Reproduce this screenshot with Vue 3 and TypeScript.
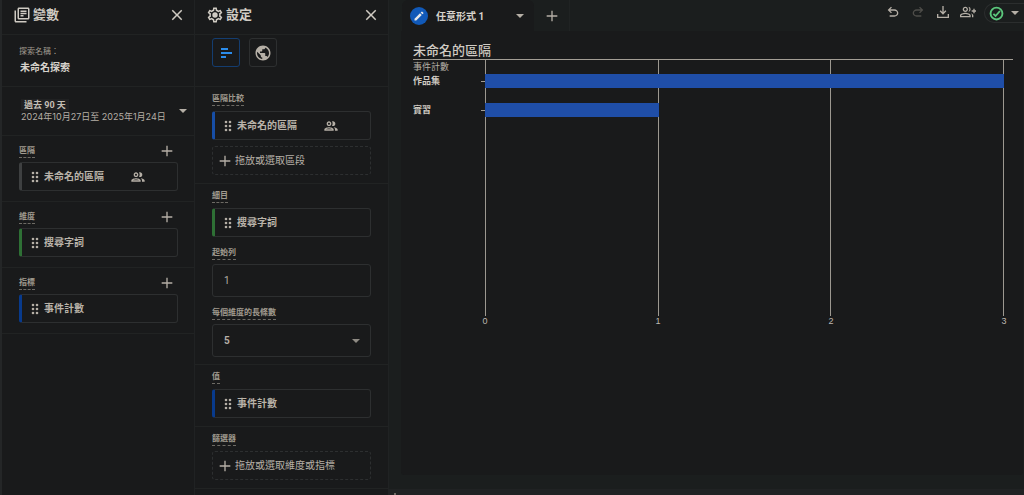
<script setup lang="ts">
import { ref } from 'vue'

interface VariableGroup {
  id: string
  label: string
  item: string
  tone: 'segment' | 'dimension' | 'metric'
  people?: boolean
}

interface ChartRow {
  label: string
  value: number
}

const variableGroups: VariableGroup[] = [
  { id: 'segments', label: '區隔', item: '未命名的區隔', tone: 'segment', people: true },
  { id: 'dimensions', label: '維度', item: '搜尋字詞', tone: 'dimension' },
  { id: 'metrics', label: '指標', item: '事件計數', tone: 'metric' },
]

const rows: ChartRow[] = [
  { label: '作品集', value: 3 },
  { label: '實習', value: 1 },
]
const maxValue = 3
const ticks = [0, 1, 2, 3]

const explorationName = ref('未命名探索')
const startRow = ref('1')
const barCount = ref('5')
</script>

<template>
  <div class="page">
    <svg class="sprite" aria-hidden="true">
      <symbol id="close" viewBox="0 0 24 24">
        <path d="M19 6.41 17.59 5 12 10.59 6.41 5 5 6.41 10.59 12 5 17.59 6.41 19 12 13.41 17.59 19 19 17.59 13.41 12z" />
      </symbol>
      <symbol id="plus" viewBox="0 0 24 24"><path d="M20 13h-7v7h-2v-7H4v-2h7V4h2v7h7z" /></symbol>
      <symbol id="caret" viewBox="0 0 24 24"><path d="M4 8l8 8 8-8z" /></symbol>
      <symbol id="grip" viewBox="0 0 8 12">
        <circle cx="2" cy="2" r="1.300" /><circle cx="6" cy="2" r="1.300" />
        <circle cx="2" cy="6" r="1.300" /><circle cx="6" cy="6" r="1.300" />
        <circle cx="2" cy="10" r="1.300" /><circle cx="6" cy="10" r="1.300" />
      </symbol>
      <symbol id="people" viewBox="0 0 24 24">
        <path d="M9 13.75c-2.34 0-7 1.17-7 3.5V19h14v-1.75c0-2.33-4.66-3.5-7-3.5zM4.34 17c.84-.58 2.87-1.25 4.66-1.25s3.82.67 4.66 1.25H4.34zM9 12c1.93 0 3.5-1.57 3.5-3.5S10.93 5 9 5 5.5 6.57 5.5 8.5 7.07 12 9 12zm0-5c.83 0 1.5.67 1.5 1.5S9.83 10 9 10s-1.5-.67-1.5-1.5S8.17 7 9 7zm7.04 6.81c1.16.84 1.96 1.96 1.96 3.44V19h4v-1.75c0-2.02-3.5-3.17-5.96-3.44zM15 12c1.93 0 3.5-1.57 3.5-3.5S16.93 5 15 5c-.54 0-1.04.13-1.5.35.63.89 1 1.98 1 3.15s-.37 2.26-1 3.15c.46.22.96.35 1.5.35z" />
      </symbol>
    </svg>

    <aside class="panel panel--variables">
      <header class="panel-head">
        <svg class="head-icon" viewBox="0 0 24 24" aria-hidden="true">
          <path d="M4 6H2v14c0 1.1.9 2 2 2h14v-2H4V6z" />
          <path d="M20 2H8c-1.1 0-2 .9-2 2v12c0 1.1.9 2 2 2h12c1.1 0 2-.9 2-2V4c0-1.1-.9-2-2-2zm0 14H8V4h12v12zM10 9h8v2h-8zm0 3h4v2h-4zm0-6h8v2h-8z" />
        </svg>
        <h2>變數</h2>
        <button class="icon-button" type="button" aria-label="關閉變數"><svg><use href="#close" /></svg></button>
      </header>

      <div class="name-block">
        <label for="exploration-name">探索名稱：</label>
        <input id="exploration-name" v-model="explorationName" type="text" />
      </div>

      <button class="date-block" type="button">
        <span class="date-text">
          <span class="date-range">過去 90 天</span>
          <span class="date-span">2024年10月27日至 2025年1月24日</span>
        </span>
        <svg class="caret"><use href="#caret" /></svg>
      </button>

      <section v-for="group in variableGroups" :key="group.id" class="variable-group">
        <div class="group-head">
          <h3 class="caption">{{ group.label }}</h3>
          <button class="icon-button" type="button" :aria-label="`新增${group.label}`"><svg><use href="#plus" /></svg></button>
        </div>
        <button class="chip" :class="`chip--${group.tone}`" type="button">
          <svg class="grip"><use href="#grip" /></svg>
          <span>{{ group.item }}</span>
          <svg v-if="group.people" class="people"><use href="#people" /></svg>
        </button>
      </section>
    </aside>

    <aside class="panel panel--settings">
      <header class="panel-head">
        <svg class="head-icon" viewBox="0 0 24 24" aria-hidden="true">
          <path d="M19.43 12.98c.04-.32.07-.64.07-.98 0-.34-.03-.66-.07-.98l2.11-1.65c.19-.15.24-.42.12-.64l-2-3.46c-.09-.16-.26-.25-.44-.25-.06 0-.12.01-.17.03l-2.49 1c-.52-.4-1.08-.73-1.69-.98l-.38-2.65C14.46 2.18 14.25 2 14 2h-4c-.25 0-.46.18-.49.42l-.38 2.65c-.61.25-1.17.59-1.69.98l-2.49-1c-.06-.02-.12-.03-.18-.03-.17 0-.34.09-.43.25l-2 3.46c-.13.22-.07.49.12.64l2.11 1.65c-.04.32-.07.65-.07.98 0 .33.03.66.07.98l-2.11 1.65c-.19.15-.24.42-.12.64l2 3.46c.09.16.26.25.44.25.06 0 .12-.01.17-.03l2.49-1c.52.4 1.08.73 1.69.98l.38 2.65c.03.24.24.42.49.42h4c.25 0 .46-.18.49-.42l.38-2.65c.61-.25 1.17-.59 1.69-.98l2.49 1c.06.02.12.03.18.03.17 0 .34-.09.43-.25l2-3.46c.12-.22.07-.49-.12-.64l-2.11-1.65zm-1.98-1.71c.04.31.05.52.05.73 0 .21-.02.43-.05.73l-.14 1.13.89.7 1.08.84-.7 1.21-1.27-.51-1.04-.42-.9.68c-.43.32-.84.56-1.25.73l-1.06.43-.16 1.13-.2 1.35h-1.4l-.19-1.35-.16-1.13-1.06-.43c-.43-.18-.83-.41-1.23-.71l-.91-.7-1.06.43-1.27.51-.7-1.21 1.08-.84.89-.7-.14-1.13c-.03-.31-.05-.54-.05-.74s.02-.43.05-.73l.14-1.13-.89-.7-1.08-.84.7-1.21 1.27.51 1.04.42.9-.68c.43-.32.84-.56 1.25-.73l1.06-.43.16-1.13.2-1.35h1.39l.19 1.35.16 1.13 1.06.43c.43.18.83.41 1.23.71l.91.7 1.06-.43 1.27-.51.7 1.21-1.07.85-.89.7.14 1.13z" />
          <circle cx="12" cy="12" r="3.6" />
        </svg>
        <h2>設定</h2>
        <button class="icon-button" type="button" aria-label="關閉設定"><svg><use href="#close" /></svg></button>
      </header>

      <div class="viz-picker">
        <button class="viz viz--active" type="button" aria-label="長條圖" aria-pressed="true">
          <svg viewBox="0 0 18 18"><path d="M4 4h7v2H4zM4 8h11v2H4zM4 12h5v2H4z" /></svg>
        </button>
        <button class="viz" type="button" aria-label="地理區域地圖" aria-pressed="false">
          <svg viewBox="0 0 24 24">
            <path d="M12 2C6.48 2 2 6.48 2 12s4.48 10 10 10 10-4.48 10-10S17.52 2 12 2zm-1 17.93c-3.95-.49-7-3.85-7-7.93 0-.62.08-1.21.21-1.79L9 15v1c0 1.1.9 2 2 2v1.93zm6.9-2.54c-.26-.81-1-1.39-1.9-1.39h-1v-3c0-.55-.45-1-1-1H8v-2h2c.55 0 1-.45 1-1V7h2c1.1 0 2-.9 2-2v-.41c2.93 1.19 5 4.06 5 7.41 0 2.08-.8 3.97-2.1 5.39z" />
          </svg>
        </button>
      </div>

      <section class="setting">
        <h3 class="caption">區隔比較</h3>
        <button class="chip chip--compare" type="button">
          <svg class="grip"><use href="#grip" /></svg>
          <span>未命名的區隔</span>
          <svg class="people"><use href="#people" /></svg>
        </button>
        <button class="drop" type="button"><svg><use href="#plus" /></svg>拖放或選取區段</button>
      </section>

      <section class="setting setting--fields">
        <h3 class="caption">細目</h3>
        <button class="chip chip--dimension" type="button">
          <svg class="grip"><use href="#grip" /></svg>
          <span>搜尋字詞</span>
        </button>
        <label class="caption" for="start-row">起始列</label>
        <input id="start-row" v-model="startRow" class="field" type="text" />
        <label class="caption" for="bar-count">每個維度的長條數</label>
        <div class="select-wrap">
          <select id="bar-count" v-model="barCount" class="field field--select">
            <option>5</option>
            <option>10</option>
            <option>15</option>
          </select>
          <svg class="caret"><use href="#caret" /></svg>
        </div>
      </section>

      <section class="setting">
        <h3 class="caption">值</h3>
        <button class="chip chip--metric" type="button">
          <svg class="grip"><use href="#grip" /></svg>
          <span>事件計數</span>
        </button>
      </section>

      <section class="setting">
        <h3 class="caption">篩選器</h3>
        <button class="drop" type="button"><svg><use href="#plus" /></svg>拖放或選取維度或指標</button>
      </section>
    </aside>

    <main class="workspace">
      <div class="toolbar">
        <div class="tab">
          <span class="tab-badge">
            <svg viewBox="0 0 24 24"><path d="M3 17.5V21h3.500L17.500 10l-3.500-3.500zM20.700 6.800a1 1 0 0 0 0-1.400l-2.100-2.100a1 1 0 0 0-1.400 0L15.300 5.200l3.500 3.500z" /></svg>
          </span>
          <button class="tab-name" type="button">任意形式 1</button>
          <button class="icon-button" type="button" aria-label="分頁選單"><svg class="caret"><use href="#caret" /></svg></button>
        </div>
        <button class="add-tab" type="button" aria-label="新增分頁"><svg><use href="#plus" /></svg></button>

        <div class="actions">
          <button class="action" type="button" aria-label="復原">
            <svg viewBox="0 0 24 24"><path d="M7 19v-2h7.100q1.575 0 2.738-1T18 13.500 16.838 11 14.100 10H7.800l2.600 2.600L9 14 4 9l5-5 1.400 1.400L7.800 8h6.300q2.425 0 4.163 1.575T20 13.500t-1.737 3.925T14.100 19z" /></svg>
          </button>
          <button class="action action--off" type="button" aria-label="重做" disabled>
            <svg viewBox="0 0 24 24"><path d="M17 19v-2H9.900q-1.575 0-2.738-1T6 13.500 7.162 11 9.900 10h6.300l-2.600 2.600L15 14l5-5-5-5-1.400 1.400L16.200 8H9.900Q7.475 8 5.737 9.575T4 13.500t1.737 3.925T9.900 19z" /></svg>
          </button>
          <button class="action" type="button" aria-label="匯出資料">
            <svg viewBox="0 0 24 24"><path d="m12 16-5-5 1.400-1.450 2.600 2.600V3h2v9.150l2.600-2.600L17 11zM3 21v-6h2v4h14v-4h2v6z" /></svg>
          </button>
          <button class="action" type="button" aria-label="共用探索">
            <svg viewBox="0 0 24 24"><path d="M8 12c2.200 0 4-1.800 4-4s-1.800-4-4-4-4 1.800-4 4 1.800 4 4 4zm0-6c1.100 0 2 .9 2 2s-.9 2-2 2-2-.9-2-2 .9-2 2-2zM8 13c-2.700 0-8 1.350-8 4v3h16v-3c0-2.650-5.300-4-8-4zm6 5H2v-1c0-.6 2.900-2 6-2s6 1.400 6 2zM12.500 4.050A5.500 5.500 0 0 1 14 8a5.500 5.500 0 0 1-1.500 3.950A4 4 0 0 0 16 8a4 4 0 0 0-3.500-3.950zM16.500 13.800c.9.800 1.500 1.900 1.500 3.200v3h2v-3c0-1.450-1.600-2.500-3.500-3.200zM20 7v2.500h-2.500v2H20V14h2v-2.500h2.500v-2H22V7z" /></svg>
          </button>
        </div>
        <button class="status" type="button" aria-label="資料品質">
          <svg class="status-icon" viewBox="0 0 24 24"><circle cx="12" cy="12" r="9.500" /><path d="m7 12.500 3.500 3.500 7-8" /></svg>
          <svg class="caret"><use href="#caret" /></svg>
        </button>
      </div>

      <article class="card">
        <h1>未命名的區隔</h1>
        <div class="chart">
          <div class="row-labels">
            <span class="metric-name">事件計數</span>
            <span v-for="row in rows" :key="row.label" class="row-label">{{ row.label }}</span>
          </div>
          <div class="plot">
            <div class="gridlines"><span v-for="tick in maxValue" :key="tick" class="grid-cell"></span></div>
            <div class="bars">
              <div v-for="row in rows" :key="row.label" class="bar-row">
                <div class="bar" :style="{ width: `${(row.value / maxValue) * 100}%` }"></div>
              </div>
            </div>
          </div>
          <div class="axis">
            <span v-for="tick in ticks" :key="tick">{{ tick }}</span>
          </div>
        </div>
      </article>

      <div class="scroll-strip" aria-hidden="true"><span class="scroll-arrow"></span></div>
    </main>
  </div>
</template>

<style>
body {
  background: #191a1b;
}
</style>

<style scoped>
* {
  box-sizing: border-box;
}

.page {
  display: grid;
  grid-template-columns: 195px 194px minmax(0, 1fr);
  min-height: 100vh;
  background: #191a1b;
  color: #b5afa6;
  fill: #b5afa6;
  font-family: Roboto, "Noto Sans CJK TC", sans-serif;
  font-size: 10px;
  line-height: 12px;
}

.sprite {
  position: absolute;
  width: 0;
  height: 0;
}

h1,
h2,
h3 {
  margin: 0;
}

button,
input,
select {
  margin: 0;
  padding: 0;
  border: 0;
  outline: 0;
  background: none;
  color: inherit;
  font: inherit;
  text-align: left;
}

svg {
  display: block;
  flex: none;
  width: 16px;
  height: 16px;
}

.panel {
  border-right: 1px solid #202223;
}

.panel--variables {
  border-left: 2px solid #242627;
}

.panel-head {
  display: flex;
  align-items: center;
  height: 35px;
  padding: 0 8px 4px 11px;
  border-bottom: 1px solid #212323;
  color: #d0cbc3;
  fill: #d0cbc3;
}

.panel-head h2 {
  flex: 1;
  margin-left: 2px;
  font-size: 13px;
  font-weight: 700;
  line-height: 18px;
}

.panel-head .icon-button svg,
.head-icon {
  width: 18px;
  height: 18px;
}

.name-block {
  display: flex;
  flex-direction: column;
  height: 52px;
  padding: 11px 17px 0;
  border-bottom: 1px solid #212323;
}

.name-block label {
  color: #a09a8f;
  font-size: 8px;
}

.name-block input {
  width: 100%;
  height: 16px;
  padding-left: 1px;
  color: #d6d2cb;
  font-weight: 700;
}

.date-block {
  display: flex;
  align-items: center;
  justify-content: space-between;
  width: 100%;
  height: 49px;
  padding: 0 5px 0 19px;
  border-bottom: 1px solid #212323;
}

.date-text {
  display: flex;
  flex-direction: column;
  align-items: flex-start;
  font-size: 9px;
}

.date-range {
  padding: 0 3px;
  background: #202122;
  color: #c4beb4;
  font-weight: 700;
}

.date-span {
  font-family: Inter, "Noto Sans CJK TC", sans-serif;
}

.caret {
  width: 12px;
  height: 12px;
}

.variable-group {
  padding: 6px 16px 10px 17px;
  border-bottom: 1px solid #212323;
}

.group-head {
  display: flex;
  align-items: center;
  justify-content: space-between;
  height: 18px;
  margin-bottom: 2px;
  padding-right: 3px;
}

.caption {
  width: fit-content;
  border-bottom: 1px dashed #6d6a64;
  color: #a09a8f;
  font-size: 8px;
  font-weight: 700;
  line-height: 12px;
}

.chip,
.drop {
  display: flex;
  align-items: center;
  width: 100%;
  height: 29px;
  border: 1px solid #2d2f30;
  border-radius: 3px;
}

.chip {
  padding-left: 9px;
  border-left-width: 3px;
  color: #b9b3a9;
  font-weight: 700;
}

.chip--segment {
  border-left-color: #3e4041;
}

.chip--dimension {
  border-left-color: #2e7035;
}

.chip--metric {
  border-left-color: #083a8c;
}

.chip--compare {
  border-left-color: #174ea6;
}

.grip {
  width: 8px;
  height: 12px;
  margin-right: 5px;
}

.people {
  margin-left: 26px;
}

.viz-picker {
  display: flex;
  gap: 9px;
  height: 52px;
  padding: 3px 17px;
  border-bottom: 1px solid #212323;
}

.viz {
  display: grid;
  place-items: center;
  width: 28px;
  height: 29px;
  border: 1px solid #2d2f30;
  border-radius: 3px;
}

.viz svg {
  width: 18px;
  height: 18px;
}

.viz--active {
  border-color: #143d70;
  fill: #2b8ceb;
}

.setting {
  display: flex;
  flex-direction: column;
  padding: 6px 17px 8px;
  border-bottom: 1px solid #212323;
}

.setting--fields {
  padding-bottom: 7px;
}

.caption + .chip,
.caption + .drop {
  margin-top: 5px;
}

.chip + .drop {
  margin-top: 6px;
}

.chip + .caption,
.field + .caption {
  margin-top: 10px;
}

.drop {
  gap: 2px;
  padding-left: 4px;
  border-style: dashed;
}

.field {
  display: block;
  width: 100%;
  height: 33px;
  margin-top: 4px;
  padding: 0 11px;
  border: 1px solid #2d2f30;
  border-radius: 3px;
}

.field--select {
  appearance: none;
  font-weight: 700;
}

.select-wrap {
  display: grid;
  align-items: center;
}

.select-wrap > * {
  grid-area: 1 / 1;
}

.select-wrap .caret {
  justify-self: end;
  margin: 4px 9px 0 0;
  fill: #8f8b84;
  pointer-events: none;
}

.workspace {
  display: flex;
  flex-direction: column;
  background: #1b1e1e;
}

.toolbar {
  display: flex;
  height: 31px;
  padding-left: 13px;
}

.tab {
  display: flex;
  align-items: center;
  width: 132px;
  padding: 1px 8px 0;
  border-radius: 6px 6px 0 0;
  background: #191a1b;
}

.tab-badge {
  display: grid;
  place-items: center;
  width: 18px;
  height: 18px;
  border-radius: 50%;
  background: #1159b8;
  fill: #e6e8ea;
}

.tab-badge svg {
  width: 12px;
  height: 12px;
}

.tab-name {
  flex: 1;
  margin: 2px 0 0 8px;
  color: #d6d2cb;
  font-weight: 700;
}

.add-tab {
  display: grid;
  place-items: center;
  width: 36px;
  border-right: 1px solid #202323;
}

.actions {
  display: flex;
  gap: 9px;
  margin-left: auto;
  padding: 4px 8px 0 0;
}

.action {
  height: 16px;
}

.action--off {
  fill: #4e4d49;
}

.status {
  display: flex;
  align-items: center;
  gap: 5px;
  width: 40px;
  height: 20px;
  margin-top: 3px;
  padding-left: 4px;
  border: 1px solid #2b2e2e;
  border-right: 0;
  border-radius: 10px 0 0 10px;
}

.status-icon {
  width: 15px;
  height: 15px;
  fill: none;
  stroke: #5bc77c;
  stroke-width: 3;
}

.card {
  flex: 1;
  margin: 0 1px 14px 12px;
  padding: 11px 10px 0 12px;
  border-radius: 0 0 3px 3px;
  background: #191a1b;
}

.card h1 {
  border-bottom: 1px solid #a39e95;
  color: #d0cbc3;
  font-size: 13px;
  font-weight: 500;
  line-height: 17px;
}

.chart {
  display: grid;
  grid-template-columns: 72px minmax(0, 1fr);
  padding-right: 9px;
}

.row-labels {
  display: flex;
  flex-direction: column;
  font-size: 9px;
}

.metric-name {
  height: 14px;
  line-height: 14px;
}

.row-label {
  height: 29px;
  color: #d0cbc3;
  font-weight: 700;
  line-height: 15px;
}

.plot {
  display: grid;
  height: 256px;
}

.plot > * {
  grid-area: 1 / 1;
}

.gridlines {
  display: grid;
  grid-template-columns: repeat(3, 1fr);
  border-right: 1px solid #9c9890;
}

.grid-cell {
  border-left: 1px solid #9c9890;
}

.bars {
  display: flex;
  flex-direction: column;
  gap: 15px;
  padding-top: 14px;
}

.bar-row {
  display: flex;
  align-items: center;
  margin-left: -4px;
}

.bar-row::before {
  content: "";
  width: 4px;
  height: 1px;
  background: #a39e95;
}

.bar {
  height: 14px;
  background: #1f4ea8;
}

.axis {
  display: flex;
  grid-column: 2;
  justify-content: space-between;
  margin: -1px -3px 0;
  color: #bdb8b0;
  font-family: "Liberation Sans", sans-serif;
  font-size: 9px;
}

.axis span {
  width: 6px;
  text-align: center;
}

.scroll-strip {
  height: 6px;
  padding: 4px 0 0 5px;
  background: #202223;
}

.scroll-arrow {
  display: block;
  width: 2px;
  height: 2px;
  background: #6d6a64;
}
</style>
